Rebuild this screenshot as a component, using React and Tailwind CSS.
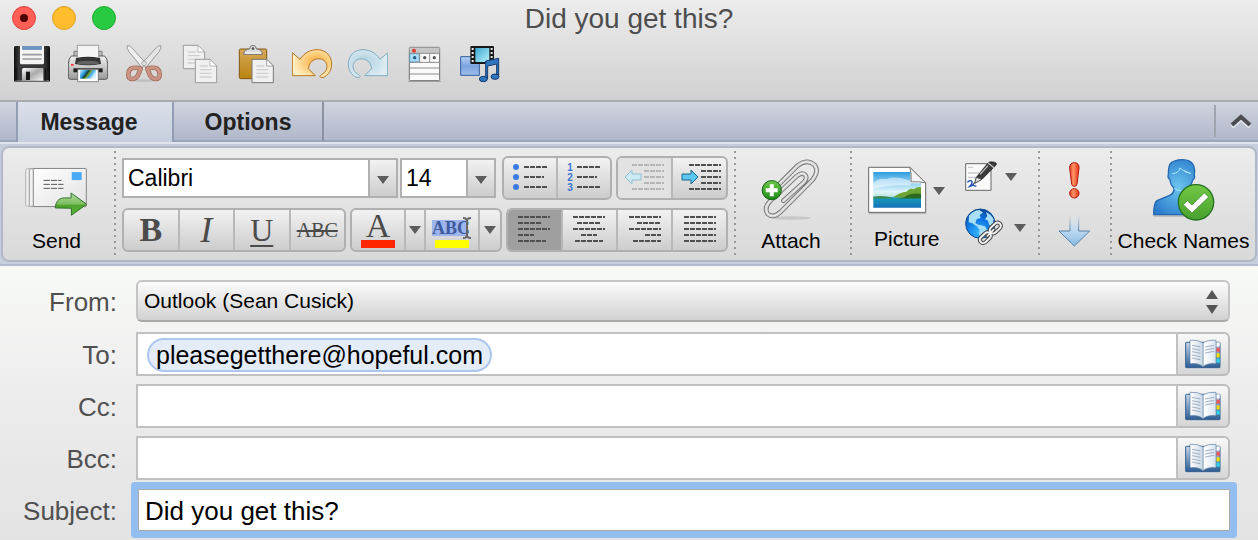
import React from "react";

const SANS = "font-['Liberation_Sans',Arial,sans-serif]";
const SERIF = "font-['Liberation_Serif','Times_New_Roman',serif]";
const FACE = "bg-linear-to-b from-[#f2f2f2] to-[#cdcdcd]";

/* ---------- Quick toolbar icons ---------- */

const SaveIcon = () => (
  <svg viewBox="0 0 120 120" className="size-10">
    <defs>
      <linearGradient id="saveBody" x2="1">
        <stop offset="0" stopColor="#0d0d0d" />
        <stop offset=".15" stopColor="#3c3c3e" />
        <stop offset=".85" stopColor="#353537" />
        <stop offset="1" stopColor="#0d0d0d" />
      </linearGradient>
      <linearGradient id="saveShutter" x2="1" y2="1">
        <stop offset="0" stopColor="#fff" />
        <stop offset=".5" stopColor="#aaa" />
        <stop offset="1" stopColor="#f4f4f4" />
      </linearGradient>
    </defs>
    <rect x="6" y="6" width="108" height="108" rx="5" fill="url(#saveBody)" />
    <path d="M9 109h102v4H9z" fill="#777" />
    <path d="M24 6h72v50q0 5-5 5H29q-5 0-5-5z" fill="#f4f4f4" />
    <path d="M30 6h60v9q0 3-3 3H33q-3 0-3-3z" fill="#7095c3" />
    <path d="M31 32h58M31 45h58" stroke="#9b9b9b" strokeWidth="5" />
    <path d="M30 78q0-6 6-6h58v38H30z" fill="url(#saveShutter)" />
    <path d="M42 83h12v25H42z" fill="#161616" />
    <path d="M100 72v38M12 72v38" stroke="#111" strokeWidth="4" />
  </svg>
);

const PrintIcon = () => (
  <svg viewBox="0 0 120 120" className="size-10">
    <defs>
      <linearGradient id="printBody" x2="0" y2="1">
        <stop offset="0" stopColor="#f1f1f1" />
        <stop offset="1" stopColor="#9a9a9a" />
      </linearGradient>
      <linearGradient id="printPhoto" x2="1" y2=".4">
        <stop offset="0" stopColor="#d8f1ff" />
        <stop offset=".35" stopColor="#2a9ade" />
        <stop offset=".5" stopColor="#173f33" />
        <stop offset=".65" stopColor="#7dab3c" />
        <stop offset=".75" stopColor="#3aa9e9" />
        <stop offset="1" stopColor="#dff4ff" />
      </linearGradient>
    </defs>
    <path d="M18 22h84v30H18z" fill="#bdbdbd" stroke="#777" strokeWidth="3" />
    <path d="M10 36Q2 42 1 60v40q0 6 7 6h104q7 0 7-6V60q-1-18-9-24z" fill="url(#printBody)" stroke="#5b5b5b" strokeWidth="3" />
    <path d="M28 4h64v42H28z" fill="#f4f4f4" stroke="#777" strokeWidth="2" />
    <path d="M24 42q36-8 72 0l3 18q-39 8-78 0z" fill="#333" />
    <path d="M28 54q32-8 64 0v5q-32 5-64 0z" fill="#626262" />
    <path d="M16 73h88v12H16z" fill="#202020" />
    <path d="M29 76h62v37H29z" fill="#fff" stroke="#555" strokeWidth="2" />
    <path d="M36 78h48v26H36z" fill="url(#printPhoto)" />
    <path d="M9 60h8v5H9z" fill="#f33" />
  </svg>
);

const CutIcon = () => (
  <svg viewBox="0 0 120 120" className="size-10">
    <ellipse cx="60" cy="110" rx="34" ry="4" fill="#aaa" opacity=".5" />
    <path d="M10 5q-3 7 5 18l39 48 12-13L22 10q-6-7-12-5z" fill="#efefef" stroke="#989898" strokeWidth="3" />
    <path d="M110 5q3 7-5 18L66 71 54 58 98 10q6-7 12-5z" fill="#e6e6e6" stroke="#989898" strokeWidth="3" />
    <g fill="none" strokeLinejoin="round">
      <path d="M50 74Q42 70 26 72 13 75 13 92q0 14 13 13 13-2 18-16z" stroke="#a06b5c" strokeWidth="14" />
      <path d="M50 74Q42 70 26 72 13 75 13 92q0 14 13 13 13-2 18-16z" stroke="#cb9483" strokeWidth="9" />
      <path d="M70 74q8-4 24-2 13 3 13 20 0 14-13 13-13-2-18-16z" stroke="#a06b5c" strokeWidth="14" />
      <path d="M70 74q8-4 24-2 13 3 13 20 0 14-13 13-13-2-18-16z" stroke="#cb9483" strokeWidth="9" />
    </g>
    <circle cx="60" cy="58" r="7" fill="#ddd" stroke="#999" strokeWidth="2" />
  </svg>
);

const Sheet = ({ x, y, stroke = "#9b9b9b" }) => (
  <g transform={`translate(${x} ${y})`}>
    <path d="M0 0h44l20 20v50H0z" fill="#f0f0f0" stroke={stroke} strokeWidth="3" />
    <path d="M44 0v20h20z" fill="#fff" stroke={stroke} strokeWidth="2" />
    <path d="M13 20h24M13 31h36M13 42h36M13 53h36" stroke="#cfcfcf" strokeWidth="4" />
  </g>
);

const CopyIcon = () => (
  <svg viewBox="0 0 120 120" className="size-10">
    <Sheet x={10} y={4} />
    <Sheet x={46} y={46} />
  </svg>
);

const PasteIcon = () => (
  <svg viewBox="0 0 120 120" className="size-10">
    <defs>
      <linearGradient id="board" x2="0" y2="1">
        <stop offset="0" stopColor="#d8a95a" />
        <stop offset="1" stopColor="#b9820f" />
      </linearGradient>
    </defs>
    <rect x="10" y="15" width="82" height="89" rx="4" fill="url(#board)" stroke="#80540f" strokeWidth="3" />
    <path d="M23 31q0-15 18-16Q41 4 51 4t10 11q18 1 18 16z" fill="#dcdcdc" stroke="#777" strokeWidth="3" />
    <circle cx="51" cy="14" r="4" fill="#555" />
    <path d="M27 27h48" stroke="#fff" strokeWidth="3" />
    <Sheet x={48} y={46} stroke="#777" />
  </svg>
);

const ARROW = "M1 26 24 46C38 24 58 17 75 17c28 0 44 20 44 43 0 24-17 41-31 41-6-1-5-6 0-9 12-6 19-17 16-30-3-13-16-20-30-17-15 3-22 14-25 29l21 21H1z";

const UndoIcon = () => (
  <svg viewBox="0 0 120 120" className="size-10">
    <defs>
      <radialGradient id="undo" cx=".6" cy=".45" r=".6">
        <stop offset="0" stopColor="#f9a932" />
        <stop offset="1" stopColor="#fff0c4" />
      </radialGradient>
    </defs>
    <path d={ARROW} fill="url(#undo)" stroke="#b9751f" strokeWidth="3" strokeLinejoin="round" />
  </svg>
);

const RedoIcon = () => (
  <svg viewBox="0 0 120 120" className="size-10">
    <defs>
      <radialGradient id="redo" cx=".6" cy=".45" r=".6">
        <stop offset="0" stopColor="#aed0e0" />
        <stop offset="1" stopColor="#deedf3" />
      </radialGradient>
    </defs>
    <path d={ARROW} transform="matrix(-1 0 0 1 120 0)" fill="url(#redo)" stroke="#7fabc0" strokeWidth="3" strokeLinejoin="round" />
  </svg>
);

const ToolboxIcon = () => (
  <svg viewBox="0 0 120 120" className="size-10">
    <path d="M12 112h99" stroke="#aaa" strokeWidth="4" />
    <rect x="16" y="10" width="91" height="100" rx="3" fill="#fafafa" stroke="#6d6d6d" strokeWidth="3" />
    <path d="M17 11h89v16H17z" fill="#c6c6c6" />
    <circle cx="30" cy="20" r="6" fill="#e23b2e" />
    <path d="M17 29h29v25H17z" fill="#a8dcfa" stroke="#3f86b4" strokeWidth="2" />
    <path d="M17 28h89M17 55h89M17 72h89M17 90h89M47 28v27M77 28v27" stroke="#8c8c8c" strokeWidth="3" />
    <circle cx="32" cy="41" r="5" fill="#245c85" />
    <circle cx="62" cy="41" r="5" fill="#555" />
    <circle cx="91" cy="41" r="5" fill="#555" />
  </svg>
);

const MediaIcon = () => (
  <svg viewBox="0 0 120 120" className="size-10">
    <defs>
      <linearGradient id="mediaSq" x2="0" y2="1">
        <stop offset="0" stopColor="#b6d0f2" />
        <stop offset=".5" stopColor="#7ca4df" />
        <stop offset="1" stopColor="#9dbdec" />
      </linearGradient>
      <linearGradient id="film" x2="1" y2="1">
        <stop offset="0" stopColor="#3ba8d3" />
        <stop offset="1" stopColor="#b9f1fa" />
      </linearGradient>
    </defs>
    <path d="M2 38h56v56H2z" fill="url(#mediaSq)" stroke="#315f9f" strokeWidth="3" />
    <rect x="31" y="6" width="71" height="54" rx="3" fill="#161616" />
    <path d="M46 12h42v42H46z" fill="url(#film)" />
    <path d="M38 12v44M95 12v44" stroke="#e8e8e8" strokeWidth="6" strokeDasharray="6 6" />
    <g fill="#2e76bd" stroke="#12396f" strokeWidth="3">
      <path d="m77 51 39-8v52h-6V60l-27 6v38h-6z" />
      <ellipse cx="70" cy="105" rx="12" ry="8" />
      <ellipse cx="105" cy="98" rx="12" ry="8" />
    </g>
  </svg>
);

const QUICK_ACTIONS = [
  ["Save", SaveIcon],
  ["Print", PrintIcon],
  ["Cut", CutIcon],
  ["Copy", CopyIcon],
  ["Paste", PasteIcon],
  ["Undo", UndoIcon],
  ["Redo", RedoIcon],
  ["Toolbox", ToolboxIcon],
  ["Media browser", MediaIcon],
];

/* ---------- Ribbon icons ---------- */

const SendIcon = () => (
  <svg viewBox="0 0 190 150" className="w-[63px] h-[50px]">
    <defs>
      <linearGradient id="card" x2="1" y2="1">
        <stop offset="0" stopColor="#fff" />
        <stop offset="1" stopColor="#e2e2e2" />
      </linearGradient>
      <linearGradient id="sendArrow" x2="0" y2="1">
        <stop offset="0" stopColor="#b5dfa1" />
        <stop offset=".5" stopColor="#7dbd60" />
        <stop offset=".55" stopColor="#4ea32c" />
        <stop offset="1" stopColor="#5eb33a" />
      </linearGradient>
    </defs>
    <rect x="2" y="5" width="60" height="113" rx="4" fill="#eee" stroke="#b5b5b5" strokeWidth="3" />
    <rect x="13" y="5" width="60" height="113" rx="3" fill="#f2f2f2" stroke="#999" strokeWidth="3" />
    <rect x="25" y="4" width="160" height="115" rx="2" fill="url(#card)" stroke="#858585" strokeWidth="3" />
    <path d="M141 15h30v24h-30z" fill="#4aa8f4" />
    <path d="M56 40h54M56 52h60M56 64h60" stroke="#555" strokeWidth="3" strokeDasharray="19 3" />
    <path d="M91 123c2-18 10-30 27-30h21V78l47 34-46 33v-21z" fill="url(#sendArrow)" stroke="#2c7026" strokeWidth="3" strokeLinejoin="round" />
  </svg>
);

const CLIP_WIRE = "M67 129 129 73q12-13 3-23-10-8-24 4L27 130Q7 151 20 169q16 14 38-6l96-96q22-27 7-46-22-20-51 2L51 82";

const AttachIcon = () => (
  <svg viewBox="0 0 180 190" className="w-[60px] h-[63px]">
    <defs>
      <linearGradient id="plus" x2="0" y2="1">
        <stop offset="0" stopColor="#6cc94b" />
        <stop offset="1" stopColor="#1b8a16" />
      </linearGradient>
    </defs>
    <ellipse cx="90" cy="181" rx="60" ry="5" fill="#999" opacity=".35" />
    <g fill="none" strokeLinecap="round">
      <path d={CLIP_WIRE} stroke="#707070" strokeWidth="14" />
      <path d={CLIP_WIRE} stroke="#cfcfcf" strokeWidth="9" />
      <path d={CLIP_WIRE} stroke="#f5f5f5" strokeWidth="3" />
    </g>
    <circle cx="32" cy="97" r="29" fill="url(#plus)" stroke="#16631a" strokeWidth="3" />
    <path d="M26 79h12v12h12v12H38v12H26v-12H14V91h12z" fill="#fff" />
  </svg>
);

const PictureIcon = () => (
  <svg viewBox="0 0 178 146" className="w-[59px] h-[49px]">
    <defs>
      <linearGradient id="sky" x2="0" y2="1">
        <stop offset="0" stopColor="#2c9de0" />
        <stop offset=".55" stopColor="#dff5fc" />
        <stop offset=".68" stopColor="#bfe6e0" />
        <stop offset=".72" stopColor="#169bb8" />
        <stop offset="1" stopColor="#1672b8" />
      </linearGradient>
    </defs>
    <path d="M2 142h174" stroke="#aaa" strokeWidth="5" opacity=".6" />
    <path d="M2 3h124l48 47v89H2z" fill="#fff" stroke="#666" strokeWidth="3" />
    <path d="M16 17h112v34h32v74H16z" fill="url(#sky)" />
    <path d="M16 50q16-16 40-12 26-10 72 6v14q-60-4-112 10z" fill="#fff" opacity=".5" />
    <path d="M78 92q20-14 38-15 10-12 22-8 12-8 22-6v31H76z" fill="#6da535" />
    <path d="M110 93q16-14 50-10v14H86z" fill="#2c6a22" />
    <path d="M16 92q26-6 58 3v2H16z" fill="#3d8a52" />
    <path d="M126 3q6 18 4 44 24-2 44 3z" fill="#f4f4f4" stroke="#777" strokeWidth="3" />
  </svg>
);

const SignatureIcon = () => (
  <svg viewBox="0 0 96 93" className="w-8 h-[31px]">
    <path d="M2 8h76v80H2z" fill="#fafafa" stroke="#666" strokeWidth="3" />
    <path d="M9 19h16M9 36h34M9 49h30" stroke="#ccc" strokeWidth="4" />
    <path d="M7 64q10-9 14-2 1 7-8 15 10-2 12-7 2 7 9 5" fill="none" stroke="#1e4bb0" strokeWidth="4" />
    <path d="m29 67 5-18L67 8q6-8 17-5 12 1 10 8L52 54z" fill="#3b3b3b" stroke="#161616" strokeWidth="2" />
    <path d="m29 67 5-18 17 6z" fill="#dedede" stroke="#333" strokeWidth="2" />
    <path d="m45 40 24-26M69 6l20 16" stroke="#c7c7c7" strokeWidth="4" />
  </svg>
);

const ChainLinks = ({ stroke, width, bar }) => (
  <g fill="none" stroke={stroke}>
    <g strokeWidth={width}>
      <rect x="72" y="50" width="38" height="20" rx="10" transform="rotate(-43 91 60)" />
      <rect x="42" y="79" width="38" height="20" rx="10" transform="rotate(-43 61 89)" />
    </g>
    <path d="m67 84 19-19" strokeWidth={bar} strokeLinecap="round" />
  </g>
);

const LinkIcon = () => (
  <svg viewBox="0 0 117 117" className="size-[39px]">
    <defs>
      <radialGradient id="globe" cx=".45" cy=".8" r=".8">
        <stop offset="0" stopColor="#36b8ff" />
        <stop offset=".6" stopColor="#0b72e0" />
        <stop offset="1" stopColor="#0b4c9f" />
      </radialGradient>
    </defs>
    <circle cx="46" cy="47" r="44" fill="url(#globe)" stroke="#0c4a8f" strokeWidth="3" />
    <path d="M12 23q12-15 31-17l11 8-10 7 3 9-12 4-4 12 10 5-4 5-15-10-11-3zM42 50l18 5 6 11-11 9-5 14-8-10 2-14-7-8zM63 13q14 5 23 20l-4 22-10-5-3-12-9-4 7-10z" fill="#a8def7" />
    <ChainLinks stroke="#444" width={12} bar={11} />
    <ChainLinks stroke="#f2f2f2" width={6} bar={5} />
  </svg>
);

const HighPriorityIcon = () => (
  <svg viewBox="0 0 33 111" className="w-[11px] h-[37px]">
    <defs>
      <linearGradient id="bang" x2="1">
        <stop offset="0" stopColor="#e4431f" />
        <stop offset=".4" stopColor="#ff9469" />
        <stop offset="1" stopColor="#e9300f" />
      </linearGradient>
    </defs>
    <path d="M16 2q15 0 14 17l-6 47q-1 7-8 7t-8-7L2 19Q1 2 16 2z" fill="url(#bang)" stroke="#b3170c" strokeWidth="3" />
    <circle cx="16" cy="94" r="14" fill="url(#bang)" stroke="#b3170c" strokeWidth="3" />
  </svg>
);

const LowPriorityIcon = () => (
  <svg viewBox="0 0 99 96" className="w-[33px] h-8">
    <defs>
      <linearGradient id="lowFill" x2="0" y2="1">
        <stop offset="0" stopColor="#dce6ee" stopOpacity="0" />
        <stop offset=".5" stopColor="#bcd9f0" />
        <stop offset="1" stopColor="#8ab9e3" />
      </linearGradient>
      <linearGradient id="lowEdge" x2="0" y2="1">
        <stop offset="0" stopColor="#567fa8" stopOpacity="0" />
        <stop offset=".5" stopColor="#567fa8" />
      </linearGradient>
    </defs>
    <path d="M36 0v48H3l46 45 46-45H62V0" fill="url(#lowFill)" stroke="url(#lowEdge)" strokeWidth="3" />
  </svg>
);

const PersonIcon = () => (
  <svg viewBox="0 0 186 186" className="size-[62px]">
    <defs>
      <radialGradient id="person" cx=".5" cy=".5" r=".6">
        <stop offset="0" stopColor="#6cc6ee" />
        <stop offset="1" stopColor="#2c7ccc" />
      </radialGradient>
      <linearGradient id="ok" x2="0" y2="1">
        <stop offset="0" stopColor="#72c744" />
        <stop offset="1" stopColor="#48a12f" />
      </linearGradient>
    </defs>
    <path d="M2 171h120" stroke="#999" strokeWidth="4" opacity=".6" />
    <path d="M2 167q0-35 10-42l38-16q14-6 13-22-10-8-13-27-7-3-4-14 0-20 5-31Q63 2 88 2q26 0 34 18 5 12 2 28 3 10-4 14-4 16-14 25-1 18 14 22l30 12v46z" fill="url(#person)" stroke="#2467b1" strokeWidth="4" />
    <path d="M58 44q18 0 23-17 14 14 33 17l-22-10M64 88q20 14 38 0" fill="none" stroke="#a9e5fa" strokeWidth="3" />
    <circle cx="129" cy="130" r="53" fill="url(#ok)" stroke="#24701e" strokeWidth="4" />
    <path d="m91 137 12-12 14 13 37-36 13 12-50 48z" fill="#fff" stroke="#337f23" strokeWidth="2" />
  </svg>
);

const BookIcon = () => (
  <svg viewBox="0 0 108 90" className="w-9 h-[30px]">
    <defs>
      <linearGradient id="cover" x2="0" y2="1">
        <stop offset="0" stopColor="#c5d7ea" />
        <stop offset="1" stopColor="#2d5c94" />
      </linearGradient>
      <linearGradient id="leaf" x2="1">
        <stop offset="0" stopColor="#fff" />
        <stop offset=".5" stopColor="#c9d8e6" />
        <stop offset=".55" stopColor="#fff" />
        <stop offset="1" stopColor="#d7e3ee" />
      </linearGradient>
    </defs>
    <rect x="2" y="10" width="103" height="76" rx="2" fill="url(#cover)" stroke="#34618f" strokeWidth="3" />
    <path d="M94 10h10v12H94z" fill="#fff" />
    <path d="M94 26h10v12H94z" fill="#f4555c" />
    <path d="M94 43h10v12H94z" fill="#ffe100" />
    <path d="M94 59h10v12H94z" fill="#2bd9ee" />
    <path d="M15 4q25-2 39 8 14-10 39-8v70q-25-3-39 9-14-12-39-9z" fill="url(#leaf)" stroke="#5f7d9e" strokeWidth="2" />
    <path d="M54 12v70" stroke="#8ba4bd" strokeWidth="3" />
    <path d="m21 19 25 5m-25 5 25 5m-25 4 25 5m-25 5 25 5m-25 4 25 5M60 24l27-5M60 33l27-5M60 42l27-5" stroke="#7890a9" strokeWidth="2" />
  </svg>
);

/* ---------- Small parts ---------- */

const Caret = () => (
  <svg viewBox="0 0 12 8" className="w-3 h-2 shrink-0" fill="#5c5c5c">
    <path d="M0 0h12L6 8z" />
  </svg>
);

const Separator = () => (
  <div className="w-[2px] h-[106px] self-center shrink-0 bg-[repeating-linear-gradient(to_bottom,#989898_0_2px,transparent_2px_6px)]" />
);

// rows: [x, y, width] of each text line in the glyph
const Lines = ({ rows, color = "#4f4f4f", children }) => (
  <svg viewBox="0 0 54 40" className="w-[54px] h-10 shrink-0">
    {rows.map(([x, y, w]) => (
      <path key={y} d={`M${x} ${y}h${w}`} stroke={color} strokeWidth="2" strokeDasharray="5 1" />
    ))}
    {children}
  </svg>
);

const ButtonGroup = ({ width, children }) => (
  <div className={`flex h-11 shrink-0 rounded-md border-2 border-[#b0b0b0] divide-x-2 divide-[#b8b8b8] ${FACE} ${width}`}>
    {children}
  </div>
);

const Key = ({ label, className = "", children, ...rest }) => (
  <button type="button" aria-label={label} className={`flex flex-1 min-w-0 items-center justify-center text-[#4b4b4b] ${className}`} {...rest}>
    {children}
  </button>
);

const Combo = ({ label, value, width }) => (
  <div className={`relative h-10 shrink-0 ${width}`}>
    <select aria-label={label} defaultValue={value} className="appearance-none w-full h-full border-2 border-[#b0b0b0] bg-white pl-1 text-[23px] leading-9 text-black">
      <option>{value}</option>
    </select>
    <div className={`pointer-events-none absolute inset-y-0 right-0 w-[30px] border-2 border-[#b0b0b0] flex items-center justify-center pt-1 ${FACE}`}>
      <Caret />
    </div>
  </div>
);

const ALIGNMENTS = [
  ["Align left", [[10, 7, 32], [10, 13, 24], [10, 19, 32], [10, 25, 16], [10, 31, 28]]],
  ["Center", [[10, 7, 32], [14, 13, 24], [10, 19, 32], [18, 25, 16], [12, 31, 28]]],
  ["Align right", [[11, 7, 32], [19, 13, 24], [11, 19, 32], [27, 25, 16], [15, 31, 28]]],
  ["Justify", [[11, 7, 32], [11, 13, 32], [11, 19, 32], [11, 25, 32], [11, 31, 32]]],
];

const FontControls = () => (
  <div className="flex flex-col justify-center gap-2 px-[6px] shrink-0">
    <div className="flex items-center">
      <Combo label="Font" value="Calibri" width="w-[276px] mr-[2px]" />
      <Combo label="Font size" value="14" width="w-24 mr-[6px]" />
      <ButtonGroup width="w-[110px] mr-1">
        <Key label="Bulleted list">
          <Lines rows={[[21, 9, 24], [21, 19, 20], [21, 29, 24]]}>
            <g fill="#3b7ae0">
              <circle cx="13" cy="9" r="3" />
              <circle cx="13" cy="19" r="3" />
              <circle cx="13" cy="29" r="3" />
            </g>
          </Lines>
        </Key>
        <Key label="Numbered list" className="gap-1">
          <span className="flex flex-col text-[10px] leading-[10px] font-bold text-[#3a74d4]">
            <span>1</span>
            <span>2</span>
            <span>3</span>
          </span>
          <svg viewBox="0 0 24 40" className="w-6 h-10" stroke="#4f4f4f" strokeWidth="2" strokeDasharray="5 1">
            <path d="M0 9h24M0 19h20M0 29h24" />
          </svg>
        </Key>
      </ButtonGroup>
      <ButtonGroup width="w-28">
        <Key label="Decrease indent" className="bg-[#e2e2e2] rounded-l">
          <Lines color="#b5b5b5" rows={[[14, 7, 32], [26, 13, 20], [26, 19, 20], [26, 25, 20], [14, 31, 32]]}>
            <path d="m7 19 7-7v4h9v6h-9v4z" fill="#cdeaf4" stroke="#8fc0d2" />
          </Lines>
        </Key>
        <Key label="Increase indent">
          <Lines rows={[[16, 7, 32], [28, 13, 20], [28, 19, 20], [28, 25, 20], [16, 31, 32]]}>
            <path d="m25 19-7-7v4H9v6h9v4z" fill="#5cc8f2" stroke="#17658b" />
          </Lines>
        </Key>
      </ButtonGroup>
    </div>

    <div className="flex items-center gap-1">
      <ButtonGroup width="w-56">
        <Key label="Bold" className={`${SERIF} text-[34px] font-bold`}>B</Key>
        <Key label="Italic" className={`${SERIF} text-[36px] italic`}>I</Key>
        <Key label="Underline" className={`${SERIF} text-[32px] underline decoration-2 underline-offset-4`}>U</Key>
        <Key label="Strikethrough" className={`${SERIF} text-[20px] line-through decoration-2`}>ABC</Key>
      </ButtonGroup>
      <ButtonGroup width="w-[152px]">
        <Key label="Font color" className={`${SERIF} flex-col text-[34px] leading-7`}>
          A
          <span className="w-[34px] h-2 bg-[#ff2600]" />
        </Key>
        <Key label="Font color options" className="max-w-5"><Caret /></Key>
        <Key label="Highlight color" className={`${SERIF} flex-col text-[18px] leading-4`}>
          <span className="relative mt-2 mb-1 h-4 w-10 text-left font-bold text-[#3e5a9d]">
            <span className="block w-9 bg-[#9db5ec]">ABC</span>
            <svg viewBox="0 0 10 24" className="absolute right-0 -top-1 w-[10px] h-6" fill="none" stroke="#666" strokeWidth="2">
              <path d="M1 2q4 0 4 3v14q0 3-4 3M9 2q-4 0-4 3v14q0 3 4 3" />
            </svg>
          </span>
          <span className="w-[34px] h-2 bg-[#ffff00]" />
        </Key>
        <Key label="Highlight color options" className="max-w-5"><Caret /></Key>
      </ButtonGroup>
      <ButtonGroup width="w-[222px]">
        {ALIGNMENTS.map(([label, rows], i) => (
          <Key key={label} label={label} aria-pressed={i === 0} className={i === 0 ? "bg-[#9f9f9f] rounded-l" : ""}>
            <Lines rows={rows} />
          </Key>
        ))}
      </ButtonGroup>
    </div>
  </div>
);

const Ribbon = () => (
  <div className="border-t-2 border-[#dfe4ee] border-b-2 border-b-[#b2bacb] bg-[#c6cedd] px-px py-[2px]">
    <div className="flex h-[116px] rounded-lg border-2 border-[#b1b8c6] bg-linear-to-b from-[#ececec] to-[#d9d9d9] text-[21px] leading-6 text-black">
      <button type="button" className="w-[111px] shrink-0 flex flex-col items-center justify-end gap-3 pb-[7px] pr-1">
        <SendIcon />
        Send
      </button>
      <Separator />
      <FontControls />
      <Separator />
      <button type="button" className="w-[114px] shrink-0 flex flex-col items-center justify-end gap-2 pb-[7px] pr-1">
        <AttachIcon />
        Attach
      </button>
      <Separator />
      <div className="flex-1 flex justify-center gap-5 min-w-[186px] pl-1">
        <button type="button" className="flex flex-col items-start justify-end gap-3 pb-[9px]">
          <span className="flex items-center gap-[6px]">
            <PictureIcon />
            <Caret />
          </span>
          <span className="pl-[6px]">Picture</span>
        </button>
        <div className="flex flex-col justify-center gap-4">
          <button type="button" aria-label="Signature" className="flex items-center gap-2">
            <SignatureIcon />
            <Caret />
          </button>
          <button type="button" aria-label="Hyperlink" className="flex items-center gap-[10px]">
            <LinkIcon />
            <Caret />
          </button>
        </div>
      </div>
      <Separator />
      <div className="w-[70px] shrink-0 flex flex-col items-center justify-center gap-4 pr-[2px]">
        <button type="button" aria-label="High priority"><HighPriorityIcon /></button>
        <button type="button" aria-label="Low priority"><LowPriorityIcon /></button>
      </div>
      <Separator />
      <button type="button" className="w-[143px] shrink-0 flex flex-col items-center justify-end gap-2 pb-[7px] whitespace-nowrap">
        <PersonIcon />
        Check Names
      </button>
    </div>
  </div>
);

const Tabs = () => (
  <nav className="flex h-[42px] border-t-2 border-[#a9abb1] bg-linear-to-b from-[#d0d4df] to-[#afb6c8] text-[23px] leading-7 font-bold text-[#222] text-shadow-[0_2px_0_#e4e8f0]">
    <div className="w-4 border-b-2 border-[#9ba6bd]" />
    <button type="button" className="w-[158px] border-x-2 border-[#939db4] bg-linear-to-b from-[#dbe0ea] to-[#c6cedd] pr-3">
      Message
    </button>
    <button type="button" className="w-[150px] border-r-2 border-b-2 border-r-[#8b91a0] border-b-[#9ba6bd] pt-[2px]">
      Options
    </button>
    <div className="flex-1 flex justify-end items-center border-b-2 border-[#9ba6bd]">
      <button type="button" aria-label="Collapse ribbon" className="h-8 w-[44px] pl-2 border-l-2 border-[#a0a4ae] flex items-center justify-center">
        <svg viewBox="0 0 22 16" className="w-[22px] h-4" fill="none" strokeWidth="4">
          <path d="m2 14 9-8 9 8" stroke="#e2e6ee" />
          <path d="m2 12 9-8 9 8" stroke="#4b4d52" />
        </svg>
      </button>
    </div>
  </nav>
);

const FIELD_LABEL = "w-[117px] shrink-0 pt-[2px] text-right text-[26px] leading-8 text-[#505050]";

const AddressRow = ({ id, label, recipient }) => (
  <div className="flex items-center gap-[19px]">
    <label htmlFor={id} className={FIELD_LABEL}>{label}</label>
    <div className="flex-1 flex h-11">
      <div className="flex-1 flex items-center border-2 border-[#c1c1c1] bg-white px-[9px]">
        {recipient && (
          <span className="h-[34px] mt-[2px] rounded-full border-2 border-[#adc6f0] bg-[#e4ecf8] px-[7px] text-[25px] leading-[31px] text-black">
            {recipient}
          </span>
        )}
        <input id={id} type="text" className="flex-1 min-w-0 h-full px-1 text-[25px] outline-none" />
      </div>
      <button type="button" aria-label={`${label} address book`} className="w-[52px] shrink-0 flex items-center justify-center rounded-r-md border-2 border-l-0 border-[#bdbdbd] bg-linear-to-b from-[#f8f8f8] to-[#d6d6d6]">
        <BookIcon />
      </button>
    </div>
  </div>
);

const HeaderFields = () => (
  <form className="flex-1 flex flex-col gap-2 pt-[14px] pb-2 pr-7 bg-linear-to-b from-[#f8faf7] via-[#ececec] to-[#e3e3e3]">
    <div className="flex items-center gap-[19px] mb-[2px]">
      <label htmlFor="from" className={FIELD_LABEL}>From:</label>
      <div className="relative flex-1">
        <select id="from" className="block appearance-none w-full h-[42px] rounded-md border-2 border-[#c4c4c4] border-b-[#a8a8a8] bg-linear-to-b from-[#fcfcfc] to-[#d2d2d2] pl-[6px] text-[21px] text-black">
          <option>Outlook (Sean Cusick)</option>
        </select>
        <svg viewBox="0 0 12 24" className="pointer-events-none absolute right-3 top-[10px] w-3 h-6" fill="#555">
          <path d="M0 9h12L6 0zM0 15h12l-6 9z" />
        </svg>
      </div>
    </div>
    <AddressRow id="to" label="To:" recipient="pleasegetthere@hopeful.com" />
    <AddressRow id="cc" label="Cc:" />
    <AddressRow id="bcc" label="Bcc:" />
    <div className="flex items-center gap-[21px]">
      <label htmlFor="subject" className={FIELD_LABEL}>Subject:</label>
      <div className="flex-1 h-11 py-px">
        <input id="subject" type="text" defaultValue="Did you get this?" className="block w-full h-full border border-[#a9a9a9] bg-white px-[6px] pt-[2px] text-[26px] text-black outline-none ring-7 ring-[#92bff0] rounded-[1px]" />
      </div>
    </div>
  </form>
);

export default function App() {
  return (
    <div className={`min-h-screen flex flex-col overflow-hidden ${SANS}`}>
      <header className="bg-linear-to-b from-[#ececec] to-[#d1d1d1] pb-4">
        <div className="grid grid-cols-[1fr_auto_1fr] items-center h-9 px-3">
          <div className="flex gap-4">
            <button type="button" aria-label="Close" className="size-6 rounded-full border border-[#e0443e] bg-[#ff5f57] flex items-center justify-center">
              <span className="size-2 rounded-full bg-[#4d0000]" />
            </button>
            <button type="button" aria-label="Minimize" className="size-6 rounded-full border border-[#e0a028] bg-[#ffbd2e]" />
            <button type="button" aria-label="Zoom" className="size-6 rounded-full border border-[#1eab30] bg-[#28ca42]" />
          </div>
          <h1 className="pt-[2px] text-[28px] leading-8 text-[#4d4d4d]">Did you get this?</h1>
        </div>
        <div className="flex gap-4 px-3 pt-2">
          {QUICK_ACTIONS.map(([label, Icon]) => (
            <button key={label} type="button" aria-label={label}>
              <Icon />
            </button>
          ))}
        </div>
      </header>
      <Tabs />
      <Ribbon />
      <HeaderFields />
    </div>
  );
}
